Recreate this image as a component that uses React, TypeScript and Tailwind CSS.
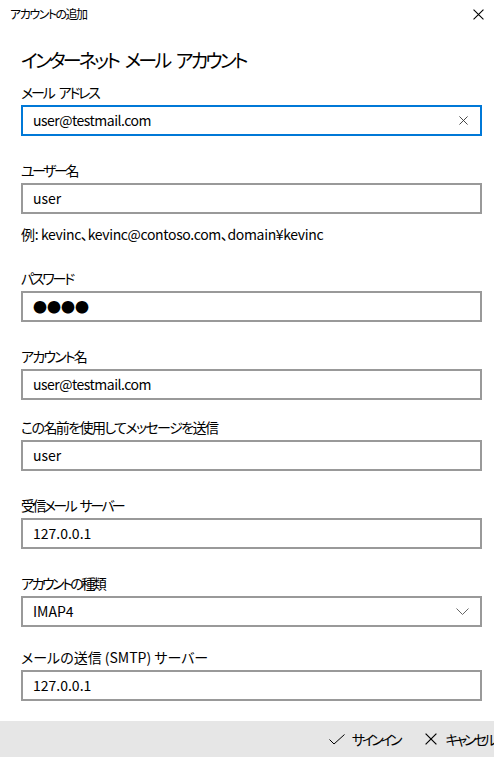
import { ReactNode } from 'react'

const font = "font-['Noto_Sans_CJK_JP','Noto_Sans',sans-serif] [font-feature-settings:'palt']"

function CloseGlyph({ size, className }: { size: number; className?: string }) {
  return (
    <svg width={size} height={size} viewBox="0 0 10 10" className={className}>
      <path d="M0.5 0.5 L9.5 9.5 M9.5 0.5 L0.5 9.5" stroke="currentColor" strokeWidth="1" fill="none" />
    </svg>
  )
}

interface FieldProps {
  label: string
  labelClass?: string
  className?: string
  children: ReactNode
}

function Field({ label, labelClass, className, children }: FieldProps) {
  return (
    <div className={className}>
      <div className={`h-5 text-[14px] leading-5 whitespace-nowrap text-black ${labelClass ?? ''}`}>{label}</div>
      <div className="mt-[3px]">{children}</div>
    </div>
  )
}

function TextBox({ value, focused, textClass }: { value: string; focused?: boolean; textClass?: string }) {
  return (
    <div
      className={`flex h-[31px] items-center border-2 pl-[10px] pr-3 text-[14px] text-black ${
        focused ? 'border-[#0078d7]' : 'border-[#999999]'
      }`}
    >
      <span className={`flex-1 ${textClass ?? ''}`}>{value}</span>
      {focused && <CloseGlyph size={9} className="text-[#333]" />}
    </div>
  )
}

export default function App() {
  return (
    <div className={`h-[757px] w-[494px] overflow-hidden bg-white ${font}`}>
      <div className="flex h-7 items-center justify-between pl-[10px] pr-[10px]">
        <span className="text-[12px] tracking-[-1.5px] text-black">アカウントの追加</span>
        <CloseGlyph size={11} className="text-black" />
      </div>

      <div className="pl-[21px] pr-3">
        <h1 className="mt-[18px] h-7 text-[19px] leading-7 tracking-[-2.8px] [word-spacing:5px] whitespace-nowrap text-black">
          インターネット メール アカウント
        </h1>

        <Field label="メール アドレス" labelClass="tracking-[-2.2px] [word-spacing:4px]" className="mt-2">
          <TextBox value="user@testmail.com" focused textClass="tracking-[-0.5px]" />
        </Field>

        <Field label="ユーザー名" labelClass="tracking-[-2.5px]" className="mt-6">
          <TextBox value="user" />
        </Field>
        <div className="mt-[10px] h-5 text-[14px] leading-5 tracking-[-0.35px] whitespace-nowrap text-black">
          例: kevinc、kevinc@contoso.com、domain¥kevinc
        </div>

        <Field label="パスワード" labelClass="tracking-[-2.2px]" className="mt-6">
          <div className="flex h-[31px] items-center border-2 border-[#999999] pl-[10px] text-[14px] text-black">
            ●●●●
          </div>
        </Field>

        <Field label="アカウント名" labelClass="tracking-[-1.8px]" className="mt-6">
          <TextBox value="user@testmail.com" textClass="tracking-[-0.5px]" />
        </Field>

        <Field label="この名前を使用してメッセージを送信" labelClass="tracking-[-1.6px]" className="mt-[17px]">
          <TextBox value="user" />
        </Field>

        <Field label="受信メール サーバー" labelClass="tracking-[-2.6px] [word-spacing:4px]" className="mt-6">
          <TextBox value="127.0.0.1" />
        </Field>

        <Field label="アカウントの種類" labelClass="tracking-[-2.5px]" className="mt-6">
          <div className="flex h-[31px] items-center border-2 border-[#999999] pl-[10px] pr-[11px] text-[14px] text-black">
            <span className="flex-1">IMAP4</span>
            <svg width="13" height="7" viewBox="0 0 13 7">
              <path d="M0.5 0.5 L6.5 6.5 L12.5 0.5" stroke="#666" strokeWidth="1" fill="none" />
            </svg>
          </div>
        </Field>

        <Field label="メールの送信 (SMTP) サーバー" className="mt-5">
          <TextBox value="127.0.0.1" />
        </Field>
      </div>

      <div className="mt-5 flex h-9 items-center justify-end gap-[25px] bg-[#e6e6e6] text-[14px] tracking-[-3px] text-black">
        <div className="flex items-center gap-[7px]">
          <svg width="16" height="11" viewBox="0 0 16 11">
            <path d="M0.5 5.5 L5 10 L15.5 0.5" stroke="#000" strokeWidth="1" fill="none" />
          </svg>
          <span>サインイン</span>
        </div>
        <div className="flex items-center gap-[9px]">
          <CloseGlyph size={12} className="text-black" />
          <span className="whitespace-nowrap">キャンセル</span>
        </div>
      </div>
    </div>
  )
}
